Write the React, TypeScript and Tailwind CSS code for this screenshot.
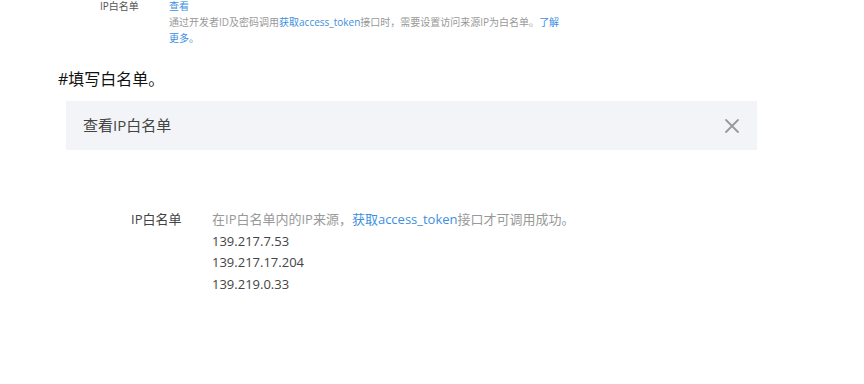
const font = "font-['Open_Sans','Noto_Sans_CJK_SC',sans-serif]"

const ips = ["139.217.7.53", "139.217.17.204", "139.219.0.33"]

export default function App() {
  return (
    <div className={`relative h-[384px] w-[864px] overflow-hidden bg-white ${font}`}>
      {/* Cropped settings row */}
      <div className="-mt-[2px] flex pl-[100px] text-[10px] leading-[16px]">
        <div className="w-[69px] text-[#555]">IP白名单</div>
        <div className="w-[392px]">
          <div className="text-[#3d8fe0]">查看</div>
          <div className="text-[#999]">
            通过开发者ID及密码调用<span className="text-[#3d8fe0]">获取access_token</span>
            接口时，需要设置访问来源IP为白名单。<span className="text-[#3d8fe0]">了解更多。</span>
          </div>
        </div>
      </div>

      {/* Heading */}
      <div className="mt-[22px] pl-[58px] text-[16px] leading-[22px] text-[#111]">#填写白名单。</div>

      {/* Dialog */}
      <div className="ml-[66px] mt-[11px] w-[691px]">
        <div className="flex h-[49px] items-center justify-between bg-[#f3f4f7] pl-[17px] pr-[17px]">
          <span className="text-[15px] text-[#444]">查看IP白名单</span>
          <svg width="16" height="16" viewBox="0 0 16 16" className="text-[#999]">
            <path d="M2 2 L14 14 M14 2 L2 14" stroke="currentColor" strokeWidth="1.8" strokeLinecap="round" />
          </svg>
        </div>

        <div className="mt-[59px] flex pl-[65px] text-[13px] leading-[21.5px]">
          <div className="w-[81px] text-[#444]">IP白名单</div>
          <div>
            <div className="text-[#999]">
              在IP白名单内的IP来源，<span className="text-[#3d8fe0]">获取access_token</span>接口才可调用成功。
            </div>
            {ips.map((ip) => (
              <div key={ip} className="text-[#444]">
                {ip}
              </div>
            ))}
          </div>
        </div>
      </div>
    </div>
  )
}
